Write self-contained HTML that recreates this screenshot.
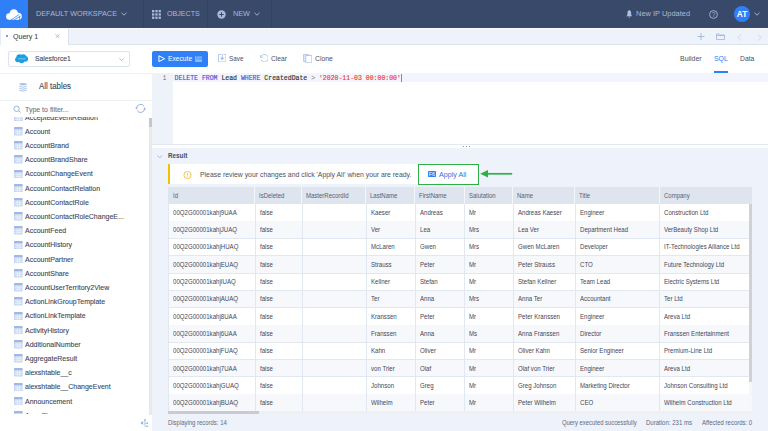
<!DOCTYPE html>
<html><head><meta charset="utf-8">
<style>
*{box-sizing:border-box;margin:0;padding:0}
html,body{width:768px;height:431px;overflow:hidden;background:#fff;font-family:"Liberation Sans",sans-serif;position:relative}
.item,.tbt{-webkit-text-stroke:0.1px currentColor;transform:scaleX(0.92);transform-origin:0 50%}
.a{position:absolute;white-space:nowrap}
#nav{left:0;top:0;width:768px;height:28px;background:#38496a}
#logo{left:0;top:0;width:28px;height:28px;background:#2f80f7}
.sep{top:0;width:1px;height:28px;background:#324260}
.navt{color:#a8bad8;font-size:7.93px;top:10px;line-height:8px;transform:scaleX(0.92);transform-origin:0 50%}
#tabbar{left:0;top:28px;width:768px;height:17px;background:#eef2fa;border-top:1px solid #f8f9fc;border-bottom:1px solid #dde3ee}
#tab{left:0;top:28.5px;width:68.6px;height:16px;background:#fff;border-right:1px solid #dde3ee;border-left:1px solid #e6ebf3}
.tbt{font-size:7.66px;color:#3d4556;line-height:9px;transform:scaleX(0.92);transform-origin:0 50%}
.icon{position:absolute}
#side{left:0;top:45px;width:152px;height:386px;background:#fff}
.hline{height:1px;background:#edf0f5}
.item{left:25.1px;font-size:7.61px;color:#3d4556;line-height:9px;transform:scaleX(0.92);transform-origin:0 50%}
.ti{left:14px;width:8.3px;height:8.3px}
#editor{left:152px;top:73px;width:616px;height:71px;background:#fff}
#gutter{left:152px;top:73px;width:21px;height:71px;background:#eef2f9}
#result{left:152px;top:148px;width:616px;height:283px;background:#eef2fa}
.th{top:187px;height:17.5px;background:#dfe5ef}
.hd{font-size:6.52px;color:#566074;top:192.3px;line-height:7px;transform:scaleX(0.92);transform-origin:0 50%}
.cell{font-size:6.63px;color:#3f4859;line-height:7px;transform:scaleX(0.92);transform-origin:0 50%}
</style></head><body>
<!-- NAV -->
<div id="nav" class="a"></div>
<div id="logo" class="a"></div>
<svg class="icon" style="left:6px;top:9px" width="16" height="11" viewBox="0 0 16 11"><g fill="#fff"><circle cx="3.3" cy="7.5" r="3.2"/><circle cx="7.8" cy="4.6" r="4.3"/><circle cx="12.3" cy="7.3" r="3.5"/><rect x="3.3" y="6" width="9" height="4.7"/></g><path d="M4.8 10.9 L13.2 5.6 M8.2 10.9 L14.6 7.1 M13.6 7.2 V10.9" stroke="#2f80f7" stroke-width="0.75" fill="none"/></svg>
<div class="a sep" style="left:142.5px"></div>
<div class="a sep" style="left:207px"></div>
<div class="a sep" style="left:271px"></div>
<div class="a navt" style="left:36.4px">DEFAULT WORKSPACE</div>
<svg class="icon" style="left:120.5px;top:12px" width="6" height="4" viewBox="0 0 6 4"><path d="M0.5 0.8 L3 3.2 L5.5 0.8" stroke="#a8bad8" stroke-width="0.9" fill="none"/></svg>
<svg class="icon" style="left:152.1px;top:10.1px" width="9" height="9" viewBox="0 0 9 9" fill="#a8bad8"><rect x="0" y="0" width="2.3" height="2.3"/><rect x="3.3" y="0" width="2.3" height="2.3"/><rect x="6.6" y="0" width="2.3" height="2.3"/><rect x="0" y="3.3" width="2.3" height="2.3"/><rect x="3.3" y="3.3" width="2.3" height="2.3"/><rect x="6.6" y="3.3" width="2.3" height="2.3"/><rect x="0" y="6.6" width="2.3" height="2.3"/><rect x="3.3" y="6.6" width="2.3" height="2.3"/><rect x="6.6" y="6.6" width="2.3" height="2.3"/></svg>
<div class="a navt" style="left:166.7px;font-size:7.72px">OBJECTS</div>
<svg class="icon" style="left:217.3px;top:9.7px" width="9" height="9" viewBox="0 0 9 9"><circle cx="4.5" cy="4.5" r="4.2" fill="#a8bad8"/><path d="M4.5 2.3 V6.7 M2.3 4.5 H6.7" stroke="#38496a" stroke-width="1"/></svg>
<div class="a navt" style="left:232.5px">NEW</div>
<svg class="icon" style="left:254px;top:12px" width="6" height="4" viewBox="0 0 6 4"><path d="M0.5 0.8 L3 3.2 L5.5 0.8" stroke="#a8bad8" stroke-width="0.9" fill="none"/></svg>
<svg class="icon" style="left:626.4px;top:9.9px" width="6.6" height="8" viewBox="0 0 6.6 8"><path d="M3.3 0.3 C2.0 0.3 1.5 1.4 1.5 2.6 L1.4 4.8 C1.3 5.5 0.6 5.9 0.2 6.3 L6.4 6.3 C6.0 5.9 5.3 5.5 5.2 4.8 L5.1 2.6 C5.1 1.4 4.6 0.3 3.3 0.3 Z" fill="#aebee0"/><circle cx="3.3" cy="7.1" r="0.7" fill="#aebee0"/></svg>
<div class="a navt" style="left:636px;font-size:8.10px;top:10.3px">New IP Updated</div>
<svg class="icon" style="left:709.1px;top:9.8px" width="9" height="9" viewBox="0 0 9 9"><circle cx="4.5" cy="4.5" r="3.9" stroke="#a8bad8" stroke-width="0.9" fill="none"/><text x="4.5" y="7" font-size="6.5" text-anchor="middle" fill="#a8bad8" font-family="Liberation Sans">?</text></svg>
<div class="a" style="left:733.8px;top:5.7px;width:16.6px;height:16.6px;border-radius:50%;background:#2f80f7"></div>
<div class="a" style="left:733.8px;top:10px;width:16.6px;text-align:center;color:#fff;font-size:8.3px;font-weight:700;line-height:9px">AT</div>
<svg class="icon" style="left:753.5px;top:12.3px" width="6" height="4" viewBox="0 0 6 4"><path d="M0.5 0.8 L3 3.2 L5.5 0.8" stroke="#a8bad8" stroke-width="0.9" fill="none"/></svg>

<!-- TAB BAR -->
<div id="tabbar" class="a"></div>
<div id="tab" class="a"></div>
<div class="a" style="left:5.7px;top:35.1px;width:2.2px;height:2.2px;border-radius:50%;background:#2f80f7"></div>
<div class="a tbt" style="left:12.8px;top:32px">Query 1</div>
<svg class="icon" style="left:54.8px;top:33.6px" width="5" height="4.6" viewBox="0 0 5 4.6"><path d="M0.4 0.3 L4.6 4.3 M4.6 0.3 L0.4 4.3" stroke="#a3b7dc" stroke-width="0.9"/></svg>
<svg class="icon" style="left:697px;top:33.2px" width="8" height="7" viewBox="0 0 8 7"><path d="M4 0 V7 M0.5 3.5 H7.5" stroke="#9fb4da" stroke-width="0.9"/></svg>
<svg class="icon" style="left:716px;top:33.2px" width="9" height="7" viewBox="0 0 9 7"><path d="M0.5 1 H3.5 L4.3 2 H8.5 V6.5 H0.5 Z M0.5 2.6 H8.5" stroke="#9fb4da" stroke-width="0.8" fill="none"/></svg>
<svg class="icon" style="left:737px;top:33.5px" width="5" height="7" viewBox="0 0 5 7"><path d="M4.5 0.3 L0.8 3.5 L4.5 6.7" stroke="#c5cfe0" stroke-width="0.7" fill="none"/></svg>
<svg class="icon" style="left:756.5px;top:33.5px" width="5" height="7" viewBox="0 0 5 7"><path d="M0.5 0.3 L4.2 3.5 L0.5 6.7" stroke="#c5cfe0" stroke-width="0.7" fill="none"/></svg>

<!-- SIDEBAR -->
<div id="side" class="a"></div>
<div class="a" style="left:8.2px;top:50.5px;width:121.5px;height:16.2px;border:1px solid #dde3ee;border-radius:2px;background:#fff"></div>
<svg class="icon" style="left:15.2px;top:54.2px" width="13.2" height="9.4" viewBox="0 0 13.2 9.4"><g fill="#1c9fe0"><circle cx="4.6" cy="3.5" r="3.2"/><circle cx="8.4" cy="3.0" r="2.7"/><circle cx="10.3" cy="4.9" r="2.8"/><circle cx="6.6" cy="6.5" r="2.8"/><circle cx="2.7" cy="5.6" r="2.6"/></g><rect x="3.2" y="4.5" width="7.4" height="0.7" fill="#fff" opacity="0.6"/></svg>
<div class="a item" style="left:34.8px;top:54px;font-size:7.39px">Salesforce1</div>
<svg class="icon" style="left:119px;top:57.5px" width="5" height="3" viewBox="0 0 5 3"><path d="M0.3 0.4 L2.5 2.5 L4.7 0.4" stroke="#9aa8c0" stroke-width="0.7" fill="none"/></svg>
<div class="a hline" style="left:0;top:73px;width:152px"></div>
<svg class="icon" style="left:18.5px;top:82.9px" width="8" height="8.8" viewBox="0 0 8 8.8" fill="none" stroke="#abc1e8" stroke-width="0.95" stroke-linecap="round"><ellipse cx="4" cy="1.2" rx="3.3" ry="0.7" fill="#abc1e8"/><path d="M0.6 3.5 Q4 5.1 7.4 3.5 M0.6 5.5 Q4 7.1 7.4 5.5 M0.6 7.4 Q4 9.0 7.4 7.4"/></svg>
<div class="a item" style="left:38.7px;top:82px;font-size:8.59px;color:#3d4556">All tables</div>
<div class="a hline" style="left:0;top:100px;width:152px"></div>
<svg class="icon" style="left:13px;top:105px" width="8.5" height="8.5" viewBox="0 0 8.5 8.5" fill="none" stroke="#98b2de" stroke-width="1"><circle cx="3.6" cy="3.8" r="2.7"/><path d="M5.6 5.8 L7.6 7.5"/></svg>
<div class="a item" style="left:24.9px;top:105.3px;color:#6c7485">Type to filter...</div>
<svg class="icon" style="left:135px;top:103px" width="11" height="11" viewBox="0 0 11 11" fill="none" stroke="#9ab3e0" stroke-width="1"><path d="M1.5 5.4 A4.1 4.1 0 0 1 9.15 3.35"/><path d="M9.7 5.4 A4.1 4.1 0 0 1 2.05 7.45"/><path d="M0.2 4.5 L2.8 4.5 L1.5 6.6 Z M8.4 6.3 L11 6.3 L9.7 4.2 Z" fill="#9ab3e0" stroke="none"/></svg>
<div class="a" style="left:0;top:116.7px;width:148.8px;height:297.6px;overflow:hidden">
<svg class="icon" style="left:14px;top:-3.80px" width="8.6" height="8.6" viewBox="0 0 8.6 8.6"><rect x="0" y="0" width="8.6" height="8.6" rx="1" fill="#c4d5f0"/><path d="M1 0 H7.6 A1 1 0 0 1 8.6 1 V2 H0 V1 A1 1 0 0 1 1 0 Z" fill="#9fb7e2"/><path d="M0.8 4.2 H7.8 M0.8 6.3 H7.8 M3.3 2.6 V7.9 M5.8 2.6 V7.9" stroke="#fff" stroke-width="0.6"/></svg>
<div class="a item" style="top:-4.05px">AcceptedEventRelation</div>
<svg class="icon" style="left:14px;top:10.40px" width="8.6" height="8.6" viewBox="0 0 8.6 8.6"><rect x="0" y="0" width="8.6" height="8.6" rx="1" fill="#c4d5f0"/><path d="M1 0 H7.6 A1 1 0 0 1 8.6 1 V2 H0 V1 A1 1 0 0 1 1 0 Z" fill="#9fb7e2"/><path d="M0.8 4.2 H7.8 M0.8 6.3 H7.8 M3.3 2.6 V7.9 M5.8 2.6 V7.9" stroke="#fff" stroke-width="0.6"/></svg>
<div class="a item" style="top:10.15px">Account</div>
<svg class="icon" style="left:14px;top:24.60px" width="8.6" height="8.6" viewBox="0 0 8.6 8.6"><rect x="0" y="0" width="8.6" height="8.6" rx="1" fill="#c4d5f0"/><path d="M1 0 H7.6 A1 1 0 0 1 8.6 1 V2 H0 V1 A1 1 0 0 1 1 0 Z" fill="#9fb7e2"/><path d="M0.8 4.2 H7.8 M0.8 6.3 H7.8 M3.3 2.6 V7.9 M5.8 2.6 V7.9" stroke="#fff" stroke-width="0.6"/></svg>
<div class="a item" style="top:24.35px">AccountBrand</div>
<svg class="icon" style="left:14px;top:38.80px" width="8.6" height="8.6" viewBox="0 0 8.6 8.6"><rect x="0" y="0" width="8.6" height="8.6" rx="1" fill="#c4d5f0"/><path d="M1 0 H7.6 A1 1 0 0 1 8.6 1 V2 H0 V1 A1 1 0 0 1 1 0 Z" fill="#9fb7e2"/><path d="M0.8 4.2 H7.8 M0.8 6.3 H7.8 M3.3 2.6 V7.9 M5.8 2.6 V7.9" stroke="#fff" stroke-width="0.6"/></svg>
<div class="a item" style="top:38.55px">AccountBrandShare</div>
<svg class="icon" style="left:14px;top:53.00px" width="8.6" height="8.6" viewBox="0 0 8.6 8.6"><rect x="0" y="0" width="8.6" height="8.6" rx="1" fill="#c4d5f0"/><path d="M1 0 H7.6 A1 1 0 0 1 8.6 1 V2 H0 V1 A1 1 0 0 1 1 0 Z" fill="#9fb7e2"/><path d="M0.8 4.2 H7.8 M0.8 6.3 H7.8 M3.3 2.6 V7.9 M5.8 2.6 V7.9" stroke="#fff" stroke-width="0.6"/></svg>
<div class="a item" style="top:52.75px">AccountChangeEvent</div>
<svg class="icon" style="left:14px;top:67.20px" width="8.6" height="8.6" viewBox="0 0 8.6 8.6"><rect x="0" y="0" width="8.6" height="8.6" rx="1" fill="#c4d5f0"/><path d="M1 0 H7.6 A1 1 0 0 1 8.6 1 V2 H0 V1 A1 1 0 0 1 1 0 Z" fill="#9fb7e2"/><path d="M0.8 4.2 H7.8 M0.8 6.3 H7.8 M3.3 2.6 V7.9 M5.8 2.6 V7.9" stroke="#fff" stroke-width="0.6"/></svg>
<div class="a item" style="top:66.95px">AccountContactRelation</div>
<svg class="icon" style="left:14px;top:81.40px" width="8.6" height="8.6" viewBox="0 0 8.6 8.6"><rect x="0" y="0" width="8.6" height="8.6" rx="1" fill="#c4d5f0"/><path d="M1 0 H7.6 A1 1 0 0 1 8.6 1 V2 H0 V1 A1 1 0 0 1 1 0 Z" fill="#9fb7e2"/><path d="M0.8 4.2 H7.8 M0.8 6.3 H7.8 M3.3 2.6 V7.9 M5.8 2.6 V7.9" stroke="#fff" stroke-width="0.6"/></svg>
<div class="a item" style="top:81.15px">AccountContactRole</div>
<svg class="icon" style="left:14px;top:95.60px" width="8.6" height="8.6" viewBox="0 0 8.6 8.6"><rect x="0" y="0" width="8.6" height="8.6" rx="1" fill="#c4d5f0"/><path d="M1 0 H7.6 A1 1 0 0 1 8.6 1 V2 H0 V1 A1 1 0 0 1 1 0 Z" fill="#9fb7e2"/><path d="M0.8 4.2 H7.8 M0.8 6.3 H7.8 M3.3 2.6 V7.9 M5.8 2.6 V7.9" stroke="#fff" stroke-width="0.6"/></svg>
<div class="a item" style="top:95.35px">AccountContactRoleChangeE...</div>
<svg class="icon" style="left:14px;top:109.80px" width="8.6" height="8.6" viewBox="0 0 8.6 8.6"><rect x="0" y="0" width="8.6" height="8.6" rx="1" fill="#c4d5f0"/><path d="M1 0 H7.6 A1 1 0 0 1 8.6 1 V2 H0 V1 A1 1 0 0 1 1 0 Z" fill="#9fb7e2"/><path d="M0.8 4.2 H7.8 M0.8 6.3 H7.8 M3.3 2.6 V7.9 M5.8 2.6 V7.9" stroke="#fff" stroke-width="0.6"/></svg>
<div class="a item" style="top:109.55px">AccountFeed</div>
<svg class="icon" style="left:14px;top:124.00px" width="8.6" height="8.6" viewBox="0 0 8.6 8.6"><rect x="0" y="0" width="8.6" height="8.6" rx="1" fill="#c4d5f0"/><path d="M1 0 H7.6 A1 1 0 0 1 8.6 1 V2 H0 V1 A1 1 0 0 1 1 0 Z" fill="#9fb7e2"/><path d="M0.8 4.2 H7.8 M0.8 6.3 H7.8 M3.3 2.6 V7.9 M5.8 2.6 V7.9" stroke="#fff" stroke-width="0.6"/></svg>
<div class="a item" style="top:123.75px">AccountHistory</div>
<svg class="icon" style="left:14px;top:138.20px" width="8.6" height="8.6" viewBox="0 0 8.6 8.6"><rect x="0" y="0" width="8.6" height="8.6" rx="1" fill="#c4d5f0"/><path d="M1 0 H7.6 A1 1 0 0 1 8.6 1 V2 H0 V1 A1 1 0 0 1 1 0 Z" fill="#9fb7e2"/><path d="M0.8 4.2 H7.8 M0.8 6.3 H7.8 M3.3 2.6 V7.9 M5.8 2.6 V7.9" stroke="#fff" stroke-width="0.6"/></svg>
<div class="a item" style="top:137.95px">AccountPartner</div>
<svg class="icon" style="left:14px;top:152.40px" width="8.6" height="8.6" viewBox="0 0 8.6 8.6"><rect x="0" y="0" width="8.6" height="8.6" rx="1" fill="#c4d5f0"/><path d="M1 0 H7.6 A1 1 0 0 1 8.6 1 V2 H0 V1 A1 1 0 0 1 1 0 Z" fill="#9fb7e2"/><path d="M0.8 4.2 H7.8 M0.8 6.3 H7.8 M3.3 2.6 V7.9 M5.8 2.6 V7.9" stroke="#fff" stroke-width="0.6"/></svg>
<div class="a item" style="top:152.15px">AccountShare</div>
<svg class="icon" style="left:14px;top:166.60px" width="8.6" height="8.6" viewBox="0 0 8.6 8.6"><rect x="0" y="0" width="8.6" height="8.6" rx="1" fill="#c4d5f0"/><path d="M1 0 H7.6 A1 1 0 0 1 8.6 1 V2 H0 V1 A1 1 0 0 1 1 0 Z" fill="#9fb7e2"/><path d="M0.8 4.2 H7.8 M0.8 6.3 H7.8 M3.3 2.6 V7.9 M5.8 2.6 V7.9" stroke="#fff" stroke-width="0.6"/></svg>
<div class="a item" style="top:166.35px">AccountUserTerritory2View</div>
<svg class="icon" style="left:14px;top:180.80px" width="8.6" height="8.6" viewBox="0 0 8.6 8.6"><rect x="0" y="0" width="8.6" height="8.6" rx="1" fill="#c4d5f0"/><path d="M1 0 H7.6 A1 1 0 0 1 8.6 1 V2 H0 V1 A1 1 0 0 1 1 0 Z" fill="#9fb7e2"/><path d="M0.8 4.2 H7.8 M0.8 6.3 H7.8 M3.3 2.6 V7.9 M5.8 2.6 V7.9" stroke="#fff" stroke-width="0.6"/></svg>
<div class="a item" style="top:180.55px">ActionLinkGroupTemplate</div>
<svg class="icon" style="left:14px;top:195.00px" width="8.6" height="8.6" viewBox="0 0 8.6 8.6"><rect x="0" y="0" width="8.6" height="8.6" rx="1" fill="#c4d5f0"/><path d="M1 0 H7.6 A1 1 0 0 1 8.6 1 V2 H0 V1 A1 1 0 0 1 1 0 Z" fill="#9fb7e2"/><path d="M0.8 4.2 H7.8 M0.8 6.3 H7.8 M3.3 2.6 V7.9 M5.8 2.6 V7.9" stroke="#fff" stroke-width="0.6"/></svg>
<div class="a item" style="top:194.75px">ActionLinkTemplate</div>
<svg class="icon" style="left:14px;top:209.20px" width="8.6" height="8.6" viewBox="0 0 8.6 8.6"><rect x="0" y="0" width="8.6" height="8.6" rx="1" fill="#c4d5f0"/><path d="M1 0 H7.6 A1 1 0 0 1 8.6 1 V2 H0 V1 A1 1 0 0 1 1 0 Z" fill="#9fb7e2"/><path d="M0.8 4.2 H7.8 M0.8 6.3 H7.8 M3.3 2.6 V7.9 M5.8 2.6 V7.9" stroke="#fff" stroke-width="0.6"/></svg>
<div class="a item" style="top:208.95px">ActivityHistory</div>
<svg class="icon" style="left:14px;top:223.40px" width="8.6" height="8.6" viewBox="0 0 8.6 8.6"><rect x="0" y="0" width="8.6" height="8.6" rx="1" fill="#c4d5f0"/><path d="M1 0 H7.6 A1 1 0 0 1 8.6 1 V2 H0 V1 A1 1 0 0 1 1 0 Z" fill="#9fb7e2"/><path d="M0.8 4.2 H7.8 M0.8 6.3 H7.8 M3.3 2.6 V7.9 M5.8 2.6 V7.9" stroke="#fff" stroke-width="0.6"/></svg>
<div class="a item" style="top:223.15px">AdditionalNumber</div>
<svg class="icon" style="left:14px;top:237.60px" width="8.6" height="8.6" viewBox="0 0 8.6 8.6"><rect x="0" y="0" width="8.6" height="8.6" rx="1" fill="#c4d5f0"/><path d="M1 0 H7.6 A1 1 0 0 1 8.6 1 V2 H0 V1 A1 1 0 0 1 1 0 Z" fill="#9fb7e2"/><path d="M0.8 4.2 H7.8 M0.8 6.3 H7.8 M3.3 2.6 V7.9 M5.8 2.6 V7.9" stroke="#fff" stroke-width="0.6"/></svg>
<div class="a item" style="top:237.35px">AggregateResult</div>
<svg class="icon" style="left:14px;top:251.80px" width="8.6" height="8.6" viewBox="0 0 8.6 8.6"><rect x="0" y="0" width="8.6" height="8.6" rx="1" fill="#c4d5f0"/><path d="M1 0 H7.6 A1 1 0 0 1 8.6 1 V2 H0 V1 A1 1 0 0 1 1 0 Z" fill="#9fb7e2"/><path d="M0.8 4.2 H7.8 M0.8 6.3 H7.8 M3.3 2.6 V7.9 M5.8 2.6 V7.9" stroke="#fff" stroke-width="0.6"/></svg>
<div class="a item" style="top:251.55px">alexshtable__c</div>
<svg class="icon" style="left:14px;top:266.00px" width="8.6" height="8.6" viewBox="0 0 8.6 8.6"><rect x="0" y="0" width="8.6" height="8.6" rx="1" fill="#c4d5f0"/><path d="M1 0 H7.6 A1 1 0 0 1 8.6 1 V2 H0 V1 A1 1 0 0 1 1 0 Z" fill="#9fb7e2"/><path d="M0.8 4.2 H7.8 M0.8 6.3 H7.8 M3.3 2.6 V7.9 M5.8 2.6 V7.9" stroke="#fff" stroke-width="0.6"/></svg>
<div class="a item" style="top:265.75px">alexshtable__ChangeEvent</div>
<svg class="icon" style="left:14px;top:280.20px" width="8.6" height="8.6" viewBox="0 0 8.6 8.6"><rect x="0" y="0" width="8.6" height="8.6" rx="1" fill="#c4d5f0"/><path d="M1 0 H7.6 A1 1 0 0 1 8.6 1 V2 H0 V1 A1 1 0 0 1 1 0 Z" fill="#9fb7e2"/><path d="M0.8 4.2 H7.8 M0.8 6.3 H7.8 M3.3 2.6 V7.9 M5.8 2.6 V7.9" stroke="#fff" stroke-width="0.6"/></svg>
<div class="a item" style="top:279.95px">Announcement</div>
<svg class="icon" style="left:14px;top:294.40px" width="8.6" height="8.6" viewBox="0 0 8.6 8.6"><rect x="0" y="0" width="8.6" height="8.6" rx="1" fill="#c4d5f0"/><path d="M1 0 H7.6 A1 1 0 0 1 8.6 1 V2 H0 V1 A1 1 0 0 1 1 0 Z" fill="#9fb7e2"/><path d="M0.8 4.2 H7.8 M0.8 6.3 H7.8 M3.3 2.6 V7.9 M5.8 2.6 V7.9" stroke="#fff" stroke-width="0.6"/></svg>
<div class="a item" style="top:294.15px">ApexClass</div>
</div>
<div class="a" style="left:148.8px;top:117.8px;width:3.2px;height:297px;background:#e9e9ec"></div>
<div class="a" style="left:148.8px;top:117.8px;width:3.2px;height:9px;background:#c4c6cc"></div>
<svg class="icon" style="left:139.8px;top:419px" width="9" height="8.4" viewBox="0 0 9 8.4" fill="#9ab3e0"><path d="M0.3 4 L3.1 2 L3.1 6 Z"/><path d="M4.9 0.9 V7.4 M4.9 4.3 H6.7 M4.9 7.3 H6.7" stroke="#9ab3e0" stroke-width="0.7" fill="none"/><circle cx="4.9" cy="0.9" r="0.85"/><rect x="6.5" y="3.6" width="1.6" height="1.4"/><rect x="6.5" y="6.6" width="1.6" height="1.4"/></svg>

<!-- TOOLBAR -->
<div class="a" style="left:152.2px;top:50.5px;width:56px;height:16.3px;background:#2f80f7;border-radius:2px"></div>
<svg class="icon" style="left:157.8px;top:55.1px" width="7.4" height="7.4" viewBox="0 0 7.4 7.4"><path d="M0.9 0.8 L6.6 3.7 L0.9 6.6 Z" stroke="#fff" stroke-width="1" stroke-linejoin="round" fill="none"/></svg>
<div class="a" style="transform:scaleX(0.92);transform-origin:0 50%;left:167.8px;top:54.5px;font-size:7.28px;color:#fff;line-height:8px">Execute</div>
<div class="a" style="left:195px;top:56px;width:7.2px;height:5.7px;background:#8cb9fb;border-radius:0.8px;color:#4a8ff7;font-size:5px;line-height:5.7px;text-align:center;font-weight:700">F9</div>
<svg class="icon" style="left:217.8px;top:53.8px" width="8.4" height="8.4" viewBox="0 0 8.4 8.4" fill="none" stroke="#a6bfe8" stroke-width="0.85"><path d="M2.9 0.45 H0.45 V7.95 H7.95 V0.45 H5.5"/><path d="M4.2 0 V5"/><path d="M2.7 3.9 L4.2 6 L5.7 3.9 Z" fill="#a6bfe8"/></svg>
<div class="a" style="transform:scaleX(0.92);transform-origin:0 50%;left:229px;top:55px;font-size:6.96px;color:#4a5263;line-height:8px">Save</div>
<svg class="icon" style="left:259.8px;top:53.8px" width="8.6" height="8.6" viewBox="0 0 8.6 8.6" fill="none" stroke="#a6bfe8" stroke-width="0.85"><path d="M1.0 2.6 A3.8 3.8 0 1 1 0.9 5.6"/><path d="M0.4 1.2 L0.6 3.4 L2.8 3.0" /></svg>
<div class="a" style="transform:scaleX(0.92);transform-origin:0 50%;left:271px;top:55px;font-size:7.28px;color:#4a5263;line-height:8px">Clear</div>
<svg class="icon" style="left:303px;top:53.7px" width="9.2" height="9.2" viewBox="0 0 9.2 9.2" stroke="#a6bfe8" stroke-width="0.8"><path d="M0.4 0.4 H5.8 V7.4 H0.4 Z" fill="#dde7f7"/><path d="M2.8 1.5 H8.8 V8.8 H2.8 Z" fill="#fff"/></svg>
<div class="a" style="transform:scaleX(0.92);transform-origin:0 50%;left:315px;top:55px;font-size:7.45px;color:#4a5263;line-height:8px">Clone</div>
<div class="a" style="transform:scaleX(0.92);transform-origin:0 50%;left:680px;top:55.2px;font-size:7.55px;color:#4a5263;line-height:8px">Builder</div>
<div class="a" style="transform:scaleX(0.92);transform-origin:0 50%;left:713.8px;top:55.2px;font-size:7.50px;color:#2f80f7;line-height:8px">SQL</div>
<div class="a" style="transform:scaleX(0.92);transform-origin:0 50%;left:739.9px;top:55.2px;font-size:7.39px;color:#4a5263;line-height:8px">Data</div>
<div class="a" style="left:713.8px;top:71.3px;width:13.8px;height:1.6px;background:#2f80f7"></div>

<!-- EDITOR -->
<div id="editor" class="a"></div>
<div id="gutter" class="a"></div>
<div class="a" style="left:173px;top:73.3px;width:595px;height:8.9px;background:#f2f5fb"></div>
<div class="a" style="left:162.4px;top:75.2px;font-family:'Liberation Mono',monospace;font-size:6.5px;color:#6f7a8c;line-height:8px">1</div>
<div class="a" style="left:174.6px;top:75.2px;font-family:'Liberation Mono',monospace;font-size:6.5px;color:#333;line-height:8px;-webkit-text-stroke:0.15px currentColor"><span style="color:#5b4fd8">DELETE</span> <span style="color:#5b4fd8">FROM</span> Lead <span style="color:#5b4fd8">WHERE</span> CreatedDate <span style="color:#999">&gt;</span> <span style="color:#ee3a3a">'2020-11-03 00:00:00'</span></div>
<div class="a" style="left:401px;top:73.8px;width:0.7px;height:8.4px;background:#8a8a8a"></div>
<div class="a" style="left:152px;top:144px;width:616px;height:1px;background:#e3e8f2"></div>
<div class="a" style="left:463px;top:146px;width:1.2px;height:1.2px;background:#6b7a90;border-radius:50%"></div>
<div class="a" style="left:466px;top:146px;width:1.2px;height:1.2px;background:#6b7a90;border-radius:50%"></div>
<div class="a" style="left:469px;top:146px;width:1.2px;height:1.2px;background:#6b7a90;border-radius:50%"></div>

<!-- RESULT -->
<div id="result" class="a"></div>
<svg class="icon" style="left:157.4px;top:155px" width="5.4" height="3.4" viewBox="0 0 5.4 3.4"><path d="M0.4 0.5 L2.7 2.9 L5 0.5" stroke="#a4b7da" stroke-width="0.9" fill="none"/></svg>
<div class="a" style="transform:scaleX(0.92);transform-origin:0 50%;left:168.4px;top:152.3px;font-size:6.85px;font-weight:700;color:#434c5e;line-height:8px">Result</div>
<div class="a" style="left:168px;top:164.3px;width:311px;height:20px;background:#fff;border-left:2px solid #f6c000"></div>
<svg class="icon" style="left:183px;top:171px" width="9" height="8" viewBox="0 0 9 8" fill="none" stroke="#f2b81c" stroke-width="0.8"><circle cx="4.5" cy="4" r="3.6"/><path d="M4.5 2.2 V4.6 M4.5 5.4 V6"/></svg>
<div class="a" style="transform:scaleX(0.92);transform-origin:0 50%;left:199.5px;top:171px;font-size:7.48px;color:#4a5263;line-height:8px">Please review your changes and click 'Apply All' when your are ready.</div>
<div class="a" style="left:417.9px;top:163.7px;width:61.2px;height:21.3px;border:1.7px solid #2db046"></div>
<div class="a" style="left:427.9px;top:171.2px;width:8.2px;height:6.1px;background:#2f80f7;border-radius:0.8px;color:#fff;font-size:5.4px;line-height:6.1px;text-align:center;font-weight:400">F6</div>
<div class="a" style="transform:scaleX(0.92);transform-origin:0 50%;left:438.7px;top:171px;font-size:7.79px;color:#2f6fe0;line-height:8px">Apply All</div>
<svg class="icon" style="left:480px;top:170.4px" width="33" height="7.6" viewBox="0 0 33 7.6"><path d="M0.2 3.8 L8 0 L8 7.6 Z" fill="#2db046"/><path d="M6 3.8 H32.2" stroke="#2db046" stroke-width="1.7"/></svg>

<div class="a" style="left:168.4px;top:187.0px;width:584.0px;height:17.0px;background:#dfe5ef"></div>
<div class="a" style="left:168.4px;top:204.0px;width:584.0px;height:207.3px;background:#fff"></div>
<div class="a" style="left:0;top:204.0px;width:768px;height:207.3px;overflow:hidden">
<div class="a" style="left:168.4px;top:16.70px;width:584.0px;height:0.8px;background:#e2e8f1"></div>
<div class="a cell" style="left:172.9px;top:4.80px">00Q2G00001kahj9UAA</div>
<div class="a cell" style="left:259.7px;top:4.80px">false</div>
<div class="a cell" style="left:370.9px;top:4.80px">Kaeser</div>
<div class="a cell" style="left:419.7px;top:4.80px">Andreas</div>
<div class="a cell" style="left:469.1px;top:4.80px">Mr</div>
<div class="a cell" style="left:517.8px;top:4.80px">Andreas Kaeser</div>
<div class="a cell" style="left:579.7px;top:4.80px">Engineer</div>
<div class="a cell" style="left:664.1px;top:4.80px">Construction Ltd</div>
<div class="a" style="left:168.4px;top:17.30px;width:584.0px;height:17.30px;background:#f7f8fb"></div>
<div class="a" style="left:168.4px;top:34.00px;width:584.0px;height:0.8px;background:#e2e8f1"></div>
<div class="a cell" style="left:172.9px;top:22.10px">00Q2G00001kahjJUAQ</div>
<div class="a cell" style="left:259.7px;top:22.10px">false</div>
<div class="a cell" style="left:370.9px;top:22.10px">Ver</div>
<div class="a cell" style="left:419.7px;top:22.10px">Lea</div>
<div class="a cell" style="left:469.1px;top:22.10px">Mrs</div>
<div class="a cell" style="left:517.8px;top:22.10px">Lea Ver</div>
<div class="a cell" style="left:579.7px;top:22.10px">Department Head</div>
<div class="a cell" style="left:664.1px;top:22.10px">VerBeauty Shop Ltd</div>
<div class="a" style="left:168.4px;top:51.30px;width:584.0px;height:0.8px;background:#e2e8f1"></div>
<div class="a cell" style="left:172.9px;top:39.40px">00Q2G00001kahjHUAQ</div>
<div class="a cell" style="left:259.7px;top:39.40px">false</div>
<div class="a cell" style="left:370.9px;top:39.40px">McLaren</div>
<div class="a cell" style="left:419.7px;top:39.40px">Gwen</div>
<div class="a cell" style="left:469.1px;top:39.40px">Mrs</div>
<div class="a cell" style="left:517.8px;top:39.40px">Gwen McLaren</div>
<div class="a cell" style="left:579.7px;top:39.40px">Developer</div>
<div class="a cell" style="left:664.1px;top:39.40px">IT-Technologies Alliance Ltd</div>
<div class="a" style="left:168.4px;top:51.90px;width:584.0px;height:17.30px;background:#f7f8fb"></div>
<div class="a" style="left:168.4px;top:68.60px;width:584.0px;height:0.8px;background:#e2e8f1"></div>
<div class="a cell" style="left:172.9px;top:56.70px">00Q2G00001kahjEUAQ</div>
<div class="a cell" style="left:259.7px;top:56.70px">false</div>
<div class="a cell" style="left:370.9px;top:56.70px">Strauss</div>
<div class="a cell" style="left:419.7px;top:56.70px">Peter</div>
<div class="a cell" style="left:469.1px;top:56.70px">Mr</div>
<div class="a cell" style="left:517.8px;top:56.70px">Peter Strauss</div>
<div class="a cell" style="left:579.7px;top:56.70px">CTO</div>
<div class="a cell" style="left:664.1px;top:56.70px">Future Technology Ltd</div>
<div class="a" style="left:168.4px;top:85.90px;width:584.0px;height:0.8px;background:#e2e8f1"></div>
<div class="a cell" style="left:172.9px;top:74.00px">00Q2G00001kahjIUAQ</div>
<div class="a cell" style="left:259.7px;top:74.00px">false</div>
<div class="a cell" style="left:370.9px;top:74.00px">Kellner</div>
<div class="a cell" style="left:419.7px;top:74.00px">Stefan</div>
<div class="a cell" style="left:469.1px;top:74.00px">Mr</div>
<div class="a cell" style="left:517.8px;top:74.00px">Stefan Kellner</div>
<div class="a cell" style="left:579.7px;top:74.00px">Team Lead</div>
<div class="a cell" style="left:664.1px;top:74.00px">Electric Systems Ltd</div>
<div class="a" style="left:168.4px;top:86.50px;width:584.0px;height:17.30px;background:#f7f8fb"></div>
<div class="a" style="left:168.4px;top:103.20px;width:584.0px;height:0.8px;background:#e2e8f1"></div>
<div class="a cell" style="left:172.9px;top:91.30px">00Q2G00001kahjAUAQ</div>
<div class="a cell" style="left:259.7px;top:91.30px">false</div>
<div class="a cell" style="left:370.9px;top:91.30px">Ter</div>
<div class="a cell" style="left:419.7px;top:91.30px">Anna</div>
<div class="a cell" style="left:469.1px;top:91.30px">Mrs</div>
<div class="a cell" style="left:517.8px;top:91.30px">Anna Ter</div>
<div class="a cell" style="left:579.7px;top:91.30px">Accountant</div>
<div class="a cell" style="left:664.1px;top:91.30px">Ter Ltd</div>
<div class="a" style="left:168.4px;top:120.50px;width:584.0px;height:0.8px;background:#e2e8f1"></div>
<div class="a cell" style="left:172.9px;top:108.60px">00Q2G00001kahj8UAA</div>
<div class="a cell" style="left:259.7px;top:108.60px">false</div>
<div class="a cell" style="left:370.9px;top:108.60px">Kranssen</div>
<div class="a cell" style="left:419.7px;top:108.60px">Peter</div>
<div class="a cell" style="left:469.1px;top:108.60px">Mr</div>
<div class="a cell" style="left:517.8px;top:108.60px">Peter Kranssen</div>
<div class="a cell" style="left:579.7px;top:108.60px">Engineer</div>
<div class="a cell" style="left:664.1px;top:108.60px">Areva Ltd</div>
<div class="a" style="left:168.4px;top:121.10px;width:584.0px;height:17.30px;background:#f7f8fb"></div>
<div class="a" style="left:168.4px;top:137.80px;width:584.0px;height:0.8px;background:#e2e8f1"></div>
<div class="a cell" style="left:172.9px;top:125.90px">00Q2G00001kahj6UAA</div>
<div class="a cell" style="left:259.7px;top:125.90px">false</div>
<div class="a cell" style="left:370.9px;top:125.90px">Franssen</div>
<div class="a cell" style="left:419.7px;top:125.90px">Anna</div>
<div class="a cell" style="left:469.1px;top:125.90px">Ms</div>
<div class="a cell" style="left:517.8px;top:125.90px">Anna Franssen</div>
<div class="a cell" style="left:579.7px;top:125.90px">Director</div>
<div class="a cell" style="left:664.1px;top:125.90px">Franssen Entertainment</div>
<div class="a" style="left:168.4px;top:155.10px;width:584.0px;height:0.8px;background:#e2e8f1"></div>
<div class="a cell" style="left:172.9px;top:143.20px">00Q2G00001kahjFUAQ</div>
<div class="a cell" style="left:259.7px;top:143.20px">false</div>
<div class="a cell" style="left:370.9px;top:143.20px">Kahn</div>
<div class="a cell" style="left:419.7px;top:143.20px">Oliver</div>
<div class="a cell" style="left:469.1px;top:143.20px">Mr</div>
<div class="a cell" style="left:517.8px;top:143.20px">Oliver Kahn</div>
<div class="a cell" style="left:579.7px;top:143.20px">Senior Engineer</div>
<div class="a cell" style="left:664.1px;top:143.20px">Premium-Line Ltd</div>
<div class="a" style="left:168.4px;top:155.70px;width:584.0px;height:17.30px;background:#f7f8fb"></div>
<div class="a" style="left:168.4px;top:172.40px;width:584.0px;height:0.8px;background:#e2e8f1"></div>
<div class="a cell" style="left:172.9px;top:160.50px">00Q2G00001kahj7UAA</div>
<div class="a cell" style="left:259.7px;top:160.50px">false</div>
<div class="a cell" style="left:370.9px;top:160.50px">von Trier</div>
<div class="a cell" style="left:419.7px;top:160.50px">Olaf</div>
<div class="a cell" style="left:469.1px;top:160.50px">Mr</div>
<div class="a cell" style="left:517.8px;top:160.50px">Olaf von Trier</div>
<div class="a cell" style="left:579.7px;top:160.50px">Engineer</div>
<div class="a cell" style="left:664.1px;top:160.50px">Areva Ltd</div>
<div class="a" style="left:168.4px;top:189.70px;width:584.0px;height:0.8px;background:#e2e8f1"></div>
<div class="a cell" style="left:172.9px;top:177.80px">00Q2G00001kahjGUAQ</div>
<div class="a cell" style="left:259.7px;top:177.80px">false</div>
<div class="a cell" style="left:370.9px;top:177.80px">Johnson</div>
<div class="a cell" style="left:419.7px;top:177.80px">Greg</div>
<div class="a cell" style="left:469.1px;top:177.80px">Mr</div>
<div class="a cell" style="left:517.8px;top:177.80px">Greg Johnson</div>
<div class="a cell" style="left:579.7px;top:177.80px">Marketing Director</div>
<div class="a cell" style="left:664.1px;top:177.80px">Johnson Consulting Ltd</div>
<div class="a" style="left:168.4px;top:190.30px;width:584.0px;height:17.30px;background:#f7f8fb"></div>
<div class="a" style="left:168.4px;top:207.00px;width:584.0px;height:0.8px;background:#e2e8f1"></div>
<div class="a cell" style="left:172.9px;top:195.10px">00Q2G00001kahjBUAQ</div>
<div class="a cell" style="left:259.7px;top:195.10px">false</div>
<div class="a cell" style="left:370.9px;top:195.10px">Wilhelm</div>
<div class="a cell" style="left:419.7px;top:195.10px">Peter</div>
<div class="a cell" style="left:469.1px;top:195.10px">Mr</div>
<div class="a cell" style="left:517.8px;top:195.10px">Peter Wilhelm</div>
<div class="a cell" style="left:579.7px;top:195.10px">CEO</div>
<div class="a cell" style="left:664.1px;top:195.10px">Wilhelm Construction Ltd</div>
<div class="a" style="left:168.4px;top:224.30px;width:584.0px;height:0.8px;background:#e2e8f1"></div>
<div class="a cell" style="left:172.9px;top:212.40px">00Q2G00001kahjCUAQ</div>
<div class="a cell" style="left:259.7px;top:212.40px">false</div>
<div class="a cell" style="left:370.9px;top:212.40px">Test</div>
<div class="a cell" style="left:419.7px;top:212.40px">Test</div>
<div class="a cell" style="left:469.1px;top:212.40px">Mr</div>
<div class="a cell" style="left:517.8px;top:212.40px">Test Test</div>
<div class="a cell" style="left:579.7px;top:212.40px">Engineer</div>
<div class="a cell" style="left:664.1px;top:212.40px">Test Ltd</div>
</div>
<div class="a" style="left:254.2px;top:187.0px;width:0.9px;height:17.0px;background:#f4f6fa"></div>
<div class="a" style="left:254.9px;top:204.0px;width:0.9px;height:207.3px;background:#e2e8f1"></div>
<div class="a" style="left:301.4px;top:187.0px;width:0.9px;height:17.0px;background:#f4f6fa"></div>
<div class="a" style="left:302.1px;top:204.0px;width:0.9px;height:207.3px;background:#e2e8f1"></div>
<div class="a" style="left:365.4px;top:187.0px;width:0.9px;height:17.0px;background:#f4f6fa"></div>
<div class="a" style="left:366.1px;top:204.0px;width:0.9px;height:207.3px;background:#e2e8f1"></div>
<div class="a" style="left:414.2px;top:187.0px;width:0.9px;height:17.0px;background:#f4f6fa"></div>
<div class="a" style="left:414.9px;top:204.0px;width:0.9px;height:207.3px;background:#e2e8f1"></div>
<div class="a" style="left:463.6px;top:187.0px;width:0.9px;height:17.0px;background:#f4f6fa"></div>
<div class="a" style="left:464.3px;top:204.0px;width:0.9px;height:207.3px;background:#e2e8f1"></div>
<div class="a" style="left:512.3px;top:187.0px;width:0.9px;height:17.0px;background:#f4f6fa"></div>
<div class="a" style="left:513.0px;top:204.0px;width:0.9px;height:207.3px;background:#e2e8f1"></div>
<div class="a" style="left:574.2px;top:187.0px;width:0.9px;height:17.0px;background:#f4f6fa"></div>
<div class="a" style="left:574.9px;top:204.0px;width:0.9px;height:207.3px;background:#e2e8f1"></div>
<div class="a" style="left:658.6px;top:187.0px;width:0.9px;height:17.0px;background:#f4f6fa"></div>
<div class="a" style="left:659.3px;top:204.0px;width:0.9px;height:207.3px;background:#e2e8f1"></div>
<div class="a" style="left:168.1px;top:204.0px;width:0.8px;height:207.3px;background:#e2e8f1"></div>
<div class="a hd" style="left:172.8px">Id</div>
<div class="a hd" style="left:259.1px">IsDeleted</div>
<div class="a hd" style="left:306.3px">MasterRecordId</div>
<div class="a hd" style="left:370.3px">LastName</div>
<div class="a hd" style="left:419.1px">FirstName</div>
<div class="a hd" style="left:468.5px">Salutation</div>
<div class="a hd" style="left:517.2px">Name</div>
<div class="a hd" style="left:579.1px">Title</div>
<div class="a hd" style="left:663.5px">Company</div>
<div class="a" style="left:749px;top:204px;width:3.4px;height:207.3px;background:#f6f7f9"></div>
<div class="a" style="left:749.2px;top:204px;width:2.6px;height:178px;background:#cfd1d5"></div>
<div class="a" style="left:168.2px;top:411.3px;width:584.2px;height:2.6px;background:#f0f0f2"></div>
<div class="a" style="left:168.2px;top:411.3px;width:91px;height:2.6px;background:#c9cbd0"></div>

<div class="a" style="transform:scaleX(0.92);transform-origin:0 50%;left:168.2px;top:418.9px;font-size:6.46px;color:#5d6a84;line-height:7px">Displaying records: 14</div>
<div class="a" style="transform:scaleX(0.92);transform-origin:0 50%;left:561.9px;top:418.9px;font-size:6.38px;color:#5d6a84;line-height:7px">Query executed successfully</div>
<div class="a" style="transform:scaleX(0.92);transform-origin:0 50%;left:646px;top:418.9px;font-size:6.57px;color:#5d6a84;line-height:7px">Duration: 231 ms</div>
<div class="a" style="transform:scaleX(0.92);transform-origin:0 50%;left:702px;top:418.9px;font-size:6.53px;color:#5d6a84;line-height:7px">Affected records: 0</div>
</body></html>
